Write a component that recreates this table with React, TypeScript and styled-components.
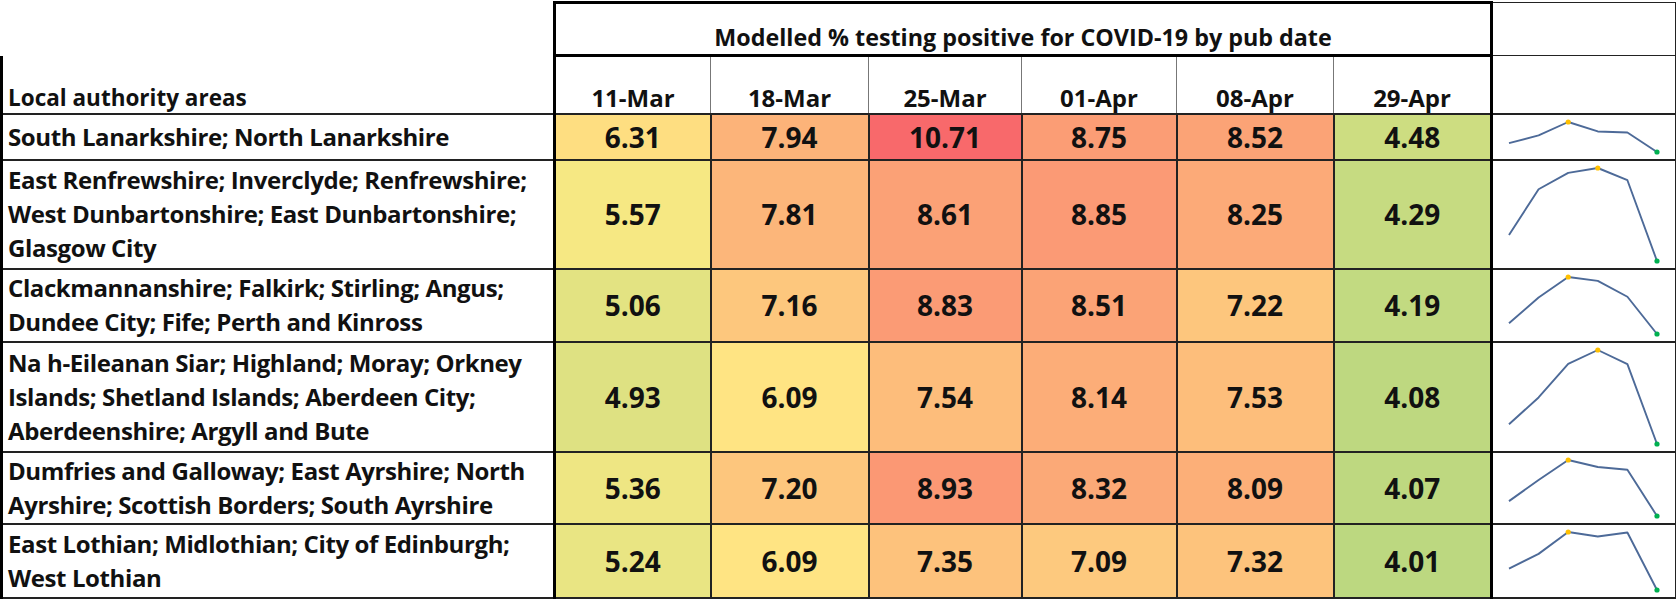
import React from "react";
import styled, { createGlobalStyle } from "styled-components";

const GlobalStyle = createGlobalStyle`
  html, body {
    margin: 0;
    padding: 0;
    background: #fff;
  }
  body {
    font-family: "Open Sans", "Liberation Sans", sans-serif;
    color: #111;
  }
  td, th {
    box-sizing: border-box;
  }
`;

interface Region {
  lines: string[];
  values: number[];
  height: number;
}

const dates = ["11-Mar", "18-Mar", "25-Mar", "01-Apr", "08-Apr", "29-Apr"];
const colWidths = [553, 156, 158, 153, 155, 157, 158, 184];

const regions: Region[] = [
  {
    lines: ["South Lanarkshire; North Lanarkshire"],
    values: [6.31, 7.94, 10.71, 8.75, 8.52, 4.48],
    height: 46,
  },
  {
    lines: [
      "East Renfrewshire; Inverclyde; Renfrewshire;",
      "West Dunbartonshire; East Dunbartonshire;",
      "Glasgow City",
    ],
    values: [5.57, 7.81, 8.61, 8.85, 8.25, 4.29],
    height: 109,
  },
  {
    lines: ["Clackmannanshire; Falkirk; Stirling; Angus;", "Dundee City; Fife; Perth and Kinross"],
    values: [5.06, 7.16, 8.83, 8.51, 7.22, 4.19],
    height: 73,
  },
  {
    lines: [
      "Na h-Eileanan Siar; Highland; Moray; Orkney",
      "Islands; Shetland Islands; Aberdeen City;",
      "Aberdeenshire; Argyll and Bute",
    ],
    values: [4.93, 6.09, 7.54, 8.14, 7.53, 4.08],
    height: 110,
  },
  {
    lines: ["Dumfries and Galloway; East Ayrshire; North", "Ayrshire; Scottish Borders; South Ayrshire"],
    values: [5.36, 7.2, 8.93, 8.32, 8.09, 4.07],
    height: 72,
  },
  {
    lines: ["East Lothian; Midlothian; City of Edinburgh;", "West Lothian"],
    values: [5.24, 6.09, 7.35, 7.09, 7.32, 4.01],
    height: 74,
  },
];

// excel style 3 colour scale: green -> yellow -> red
const mix = (a: number[], b: number[], t: number) =>
  `rgb(${a.map((c, i) => Math.round(c + (b[i] - c) * t)).join(",")})`;

const heat = (v: number) => {
  const lo = [99, 190, 123];
  const mid = [255, 235, 132];
  const hi = [248, 105, 107];
  if (v <= 5.82) return mix(lo, mid, Math.max(0, (v - 1.62) / (5.82 - 1.62)));
  return mix(mid, hi, Math.min(1, (v - 5.82) / (10.71 - 5.82)));
};

const Sparkline = ({ values, height }: { values: number[]; height: number }) => {
  const pad = 7;
  const h = height - 2;
  const max = Math.max(...values);
  const min = Math.min(...values);
  const pts = values.map((v, i) => [16 + i * 29.6, pad + ((max - v) / (max - min)) * (h - pad * 2)]);
  const top = pts[values.indexOf(max)];
  const bottom = pts[values.indexOf(min)];

  return (
    <SparkSvg width={182} height={h} viewBox={`0 0 182 ${h}`}>
      <polyline
        points={pts.map((p) => p.join(",")).join(" ")}
        fill="none"
        stroke="#4d6a98"
        strokeWidth={1.9}
        strokeLinejoin="round"
      />
      <circle cx={top[0]} cy={top[1]} r={2.6} fill="#ffc000" />
      <circle cx={bottom[0]} cy={bottom[1]} r={2.6} fill="#00b050" />
    </SparkSvg>
  );
};

const App = () => {
  return (
    <>
      <GlobalStyle />
      <Page>
        <Table>
          <colgroup>
            {colWidths.map((w, i) => (
              <Col key={i} $w={w} />
            ))}
          </colgroup>
          <thead>
            <tr>
              <Blank $h={53} />
              <TitleCell colSpan={6}>Modelled % testing positive for COVID-19 by pub date</TitleCell>
              <SparkHead />
            </tr>
            <tr>
              <AreaHead>Local authority areas</AreaHead>
              {dates.map((d, i) => (
                <DateHead key={d} $last={i === dates.length - 1}>
                  {d}
                </DateHead>
              ))}
              <SparkHeadLower />
            </tr>
          </thead>
          <tbody>
            {regions.map((r, ri) => (
              <tr key={ri}>
                <AreaCell $h={r.height}>
                  {r.lines.map((l) => (
                    <Line key={l}>{l}</Line>
                  ))}
                </AreaCell>
                {r.values.map((v, i) => (
                  <ValueCell key={i} $bg={heat(v)} $last={i === r.values.length - 1}>
                    {v.toFixed(2)}
                  </ValueCell>
                ))}
                <SparkCell>
                  <Sparkline values={r.values} height={r.height} />
                </SparkCell>
              </tr>
            ))}
          </tbody>
        </Table>
      </Page>
    </>
  );
};

export default App;

const Page = styled.div`
  width: 1676px;
  padding-top: 1px;
`;

const Table = styled.table`
  width: 1674px;
  table-layout: fixed;
  border-collapse: collapse;
  font-weight: 700;
`;

const Col = styled.col<{ $w: number }>`
  width: ${(p) => p.$w}px;
`;

const Blank = styled.td<{ $h: number }>`
  height: ${(p) => p.$h}px;
  padding: 0;
`;

const TitleCell = styled.th`
  border: 3px solid #000;
  font-size: 23.3px;
  line-height: 28px;
  font-weight: 700;
  text-align: center;
  vertical-align: bottom;
  padding: 0 0 3px;
`;

const SparkHead = styled.td`
  border-top: 1px solid #222;
  border-right: 1px solid #222;
  border-bottom: 1px solid #222;
`;

const AreaHead = styled.th`
  height: 58px;
  border-left: 3px solid #000;
  border-right: 3px solid #000;
  border-bottom: 2px solid #222;
  font-size: 22.5px;
  line-height: 28px;
  font-weight: 700;
  text-align: left;
  vertical-align: bottom;
  padding: 0 0 1px 5px;
`;

const DateHead = styled.th<{ $last: boolean }>`
  border-right: ${(p) => (p.$last ? "3px solid #000" : "1px solid #777")};
  border-bottom: 2px solid #222;
  font-size: 24px;
  line-height: 28px;
  font-weight: 700;
  text-align: center;
  vertical-align: bottom;
  padding: 0 0 1px;
`;

const SparkHeadLower = styled.td`
  border-right: 1px solid #222;
  border-bottom: 2px solid #222;
`;

const AreaCell = styled.td<{ $h: number }>`
  height: ${(p) => p.$h}px;
  border-left: 3px solid #000;
  border-right: 3px solid #000;
  border-bottom: 2px solid #222;
  padding: 0 0 0 5px;
  vertical-align: middle;
  font-size: 24px;
  line-height: 34px;
  letter-spacing: -0.4px;
`;

const Line = styled.div`
  white-space: nowrap;
`;

const ValueCell = styled.td<{ $bg: string; $last: boolean }>`
  background: ${(p) => p.$bg};
  border-right: ${(p) => (p.$last ? "3px solid #000" : "2px solid #222")};
  border-bottom: 2px solid #222;
  text-align: center;
  vertical-align: middle;
  font-size: 28px;
  line-height: 34px;
  padding: 0;
`;

const SparkCell = styled.td`
  border-right: 1px solid #222;
  border-bottom: 2px solid #222;
  padding: 0;
  vertical-align: middle;
`;

const SparkSvg = styled.svg`
  display: block;
`;
